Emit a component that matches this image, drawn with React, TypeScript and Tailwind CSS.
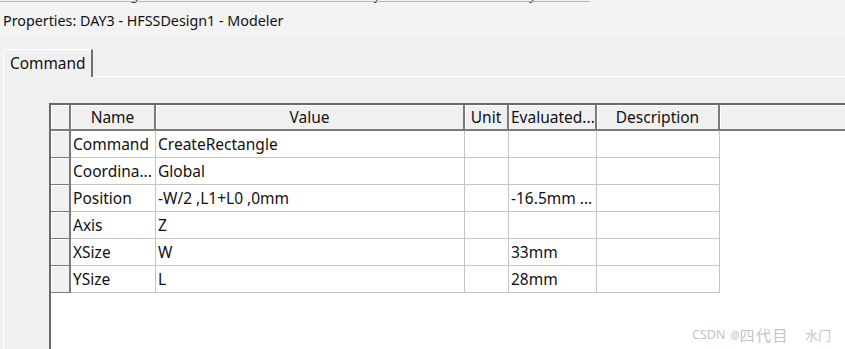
import React from "react";

type Row = { name: string; value: string; unit: string; evaluated: string; description: string };

const rows: Row[] = [
  { name: "Command", value: "CreateRectangle", unit: "", evaluated: "", description: "" },
  { name: "Coordina...", value: "Global", unit: "", evaluated: "", description: "" },
  { name: "Position", value: "-W/2 ,L1+L0 ,0mm", unit: "", evaluated: "-16.5mm ...", description: "" },
  { name: "Axis", value: "Z", unit: "", evaluated: "", description: "" },
  { name: "XSize", value: "W", unit: "", evaluated: "33mm", description: "" },
  { name: "YSize", value: "L", unit: "", evaluated: "28mm", description: "" },
];

const headCell =
  "h-[26px] shrink-0 flex items-center justify-center pt-[2px] bg-[#f0f0f0] border-r-2 border-b-2 border-[#7a7a7a] shadow-[inset_1px_1px_0_#ffffff] overflow-hidden whitespace-nowrap";
const dataCell =
  "h-[27px] shrink-0 flex items-center pl-[2px] pt-[2px] bg-white border-r border-b border-[#c4c4c4] overflow-hidden whitespace-nowrap";

export default function App() {
  return (
    <div
      className="relative w-[845px] h-[349px] overflow-hidden bg-[#f0f0f0] text-[#111]"
      style={{ fontFamily: '"Noto Sans", "Open Sans", sans-serif' }}
    >
      {/* menu strip above, scrolled almost out of view */}
      <div className="h-[3px] overflow-hidden bg-[#f3f3f3] relative">
        <div className="-mt-[15px] pl-[3px] flex gap-[40px] text-[14px] leading-[17px] text-[#444]">
          <span>Simulation</span>
          <span>Region</span>
          <span>Automation</span>
          <span>Draw Objects</span>
          <span>Coordinate System</span>
        </div>
        <div className="absolute left-0 top-[1px] w-[590px] h-px bg-[#b4b4b4]" />
      </div>

      {/* title */}
      <div className="h-[35px] bg-[#f3f3f3] flex items-center pl-[3px] pt-[1px] text-[14.3px]">
        Properties: DAY3 - HFSSDesign1 - Modeler
      </div>

      {/* tabs */}
      <div className="pt-[11px] pl-[3px] flex items-end">
        <div className="h-[28px] w-[90px] flex items-center pl-[6px] text-[15.4px] border-l border-t border-white border-r-2 border-r-[#6f6f6f] rounded-tl-[2px]">
          Command
        </div>
        <div className="flex-1 h-px bg-white" />
      </div>

      {/* tab page */}
      <div className="ml-[3px] border-l border-white h-[280px] pt-[26px] pl-[45px]">
        <div className="h-full bg-white border-l-2 border-t-2 border-[#6a6a6a]">
          {/* header */}
          <div className="flex text-[15.5px]">
            <div className={`${headCell} w-[20px]`} />
            <div className={`${headCell} w-[85px]`}>Name</div>
            <div className={`${headCell} w-[309px]`}>Value</div>
            <div className={`${headCell} w-[44px]`}>Unit</div>
            <div className={`${headCell} w-[88px] justify-start pl-[2px]`}>Evaluated...</div>
            <div className={`${headCell} w-[123px]`}>Description</div>
            <div className="h-[26px] flex-1 bg-[#f0f0f0] border-b-2 border-[#7a7a7a] shadow-[inset_1px_1px_0_#ffffff]" />
          </div>
          {rows.map((r) => (
            <div key={r.name} className="flex text-[15.5px]">
              <div className="h-[27px] w-[20px] shrink-0 bg-[#f0f0f0] border-r-2 border-b border-[#7a7a7a] shadow-[inset_1px_1px_0_#ffffff]" />
              <div className={`${dataCell} w-[85px]`}>{r.name}</div>
              <div className={`${dataCell} w-[309px]`}>{r.value}</div>
              <div className={`${dataCell} w-[44px]`}>{r.unit}</div>
              <div className={`${dataCell} w-[88px]`}>{r.evaluated}</div>
              <div className={`${dataCell} w-[123px]`}>{r.description}</div>
            </div>
          ))}
        </div>
      </div>

      <div
        className="absolute left-[692px] top-[324px] flex items-center text-[#c4c4c4]"
        style={{ fontFamily: '"Noto Sans", "Noto Sans CJK SC", sans-serif' }}
      >
        <span className="text-[12.5px]">CSDN</span>
        <span className="ml-[5px] text-[10px]">@</span>
        <span className="text-[15px] tracking-[1.5px]">四代目</span>
        <span className="ml-[16px] text-[13px]">水门</span>
      </div>
    </div>
  );
}
